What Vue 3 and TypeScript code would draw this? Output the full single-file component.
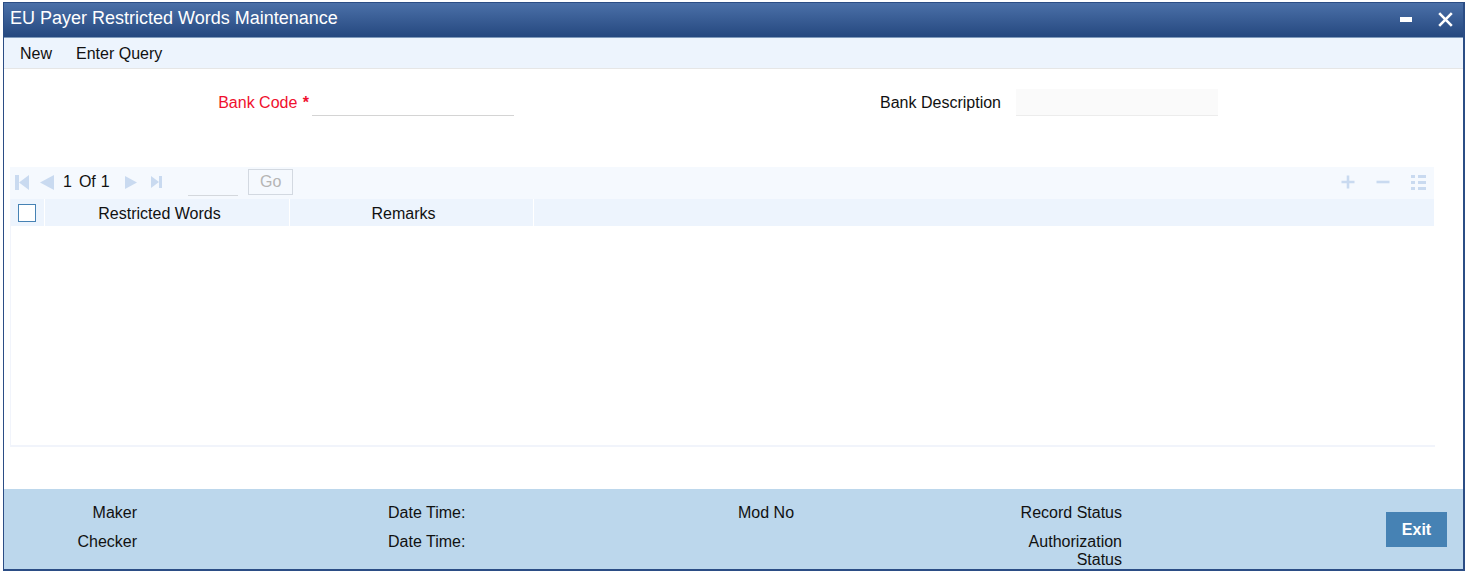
<script setup lang="ts">
const leftFooter: string[] = ['Maker', 'Checker']
const dateLabels: string[] = ['Date Time:', 'Date Time:']
</script>

<template>
  <div class="window">
    <header class="titlebar">
      <h1 class="title">EU Payer Restricted Words Maintenance</h1>
      <div class="win-actions">
        <svg class="win-icon" width="12" height="5" viewBox="0 0 12 5"><rect x="0" y="0" width="12" height="5" fill="#fff" /></svg>
        <svg class="win-icon" width="15" height="15" viewBox="0 0 15 15"><path d="M1.2 1.2 L13.8 13.8 M13.8 1.2 L1.2 13.8" stroke="#fff" stroke-width="2.6" fill="none" /></svg>
      </div>
    </header>

    <nav class="menu">
      <span class="menu-item">New</span>
      <span class="menu-item">Enter Query</span>
    </nav>

    <main class="content">
      <section class="form-row">
        <div class="field field-code">
          <label class="label required">Bank Code <b class="star">*</b></label>
          <div class="input"></div>
        </div>
        <div class="field field-desc">
          <label class="label">Bank Description</label>
          <div class="input readonly"></div>
        </div>
      </section>

      <section class="grid">
        <div class="pager">
          <div class="pager-left">
            <svg width="14" height="15" viewBox="0 0 14 15"><rect x="0" y="0" width="4" height="15" fill="#c9daf0" /><path d="M14 0 V15 L4 7.5 Z" fill="#c9daf0" /></svg>
            <svg width="14" height="15" viewBox="0 0 14 15" class="pg-prev"><path d="M14 0 V15 L0 7.5 Z" fill="#c9daf0" /></svg>
            <span class="pg-text pg-cur">1</span>
            <span class="pg-text pg-of">Of</span>
            <span class="pg-text pg-total">1</span>
            <svg width="12" height="13" viewBox="0 0 12 13" class="pg-next"><path d="M0 0 V13 L12 6.5 Z" fill="#c9daf0" /></svg>
            <svg width="11" height="12" viewBox="0 0 11 12" class="pg-last"><path d="M0 0 V12 L8 6 Z" fill="#c9daf0" /><rect x="8" y="0" width="3" height="12" fill="#c9daf0" /></svg>
            <div class="pg-input"></div>
            <button class="go" type="button">Go</button>
          </div>
          <div class="pager-right">
            <svg width="14" height="14" viewBox="0 0 14 14"><path d="M7 0.5 V13.5 M0.5 7 H13.5" stroke="#c9daf0" stroke-width="2.6" /></svg>
            <svg width="14" height="14" viewBox="0 0 14 14"><path d="M0.5 7 H13.5" stroke="#c9daf0" stroke-width="2.6" /></svg>
            <svg width="15" height="15" viewBox="0 0 15 15">
              <g fill="#c9daf0">
                <rect x="0" y="0" width="4" height="3" /><rect x="7" y="0" width="8" height="3" />
                <rect x="0" y="6" width="4" height="3" /><rect x="7" y="6" width="8" height="3" />
                <rect x="0" y="12" width="4" height="3" /><rect x="7" y="12" width="8" height="3" />
              </g>
            </svg>
          </div>
        </div>
        <div class="table-body">
          <div class="thead">
            <div class="th th-check"><span class="check"></span></div>
            <div class="th th-words">Restricted Words</div>
            <div class="th th-remarks">Remarks</div>
            <div class="th th-rest"></div>
          </div>
        </div>
      </section>
    </main>

    <footer class="footer">
      <div class="f-col f-who">
        <span v-for="t in leftFooter" :key="t" class="f-line">{{ t }}</span>
      </div>
      <div class="f-col f-date">
        <span v-for="(t, i) in dateLabels" :key="i" class="f-line">{{ t }}</span>
      </div>
      <div class="f-col f-mod">
        <span class="f-line">Mod No</span>
      </div>
      <div class="f-col f-status">
        <span class="f-line">Record Status</span>
        <span class="f-line f-wrap">Authorization Status</span>
      </div>
      <button class="exit" type="button">Exit</button>
    </footer>
  </div>
</template>

<style scoped>
.window {
  box-sizing: border-box;
  width: 1462px;
  height: 569px;
  margin: 2px 0 0 3px;
  border: solid #2b4d85;
  border-width: 1px 2px 2px 1px;
  display: flex;
  flex-direction: column;
  background: #fff;
  font-family: "Liberation Sans", Arial, sans-serif;
  font-size: 16px;
  color: #111;
  overflow: hidden;
}
.titlebar {
  flex: 0 0 35px;
  box-sizing: border-box;
  display: flex;
  align-items: center;
  justify-content: space-between;
  padding: 0 10px 4px 6px;
  background: linear-gradient(#4b70a8, #25487f);
  border-bottom: 1px solid #7f9abb;
}
.title {
  margin: 0;
  font-size: 18px;
  font-weight: 400;
  color: #fff;
}
.win-actions {
  display: flex;
  align-items: center;
  gap: 26px;
  margin-top: 3px;
}
.win-icon {
  display: block;
}
.menu {
  flex: 0 0 31px;
  box-sizing: border-box;
  display: flex;
  padding-left: 6px;
  background: #edf4fd;
  border-bottom: 1px solid #e6e6e6;
}
.menu-item {
  padding: 2px 10px 0;
  margin-right: 3px;
  line-height: 28px;
  color: #111;
}
.menu-item + .menu-item {
  padding: 2px 9px 0 10px;
  margin-left: 1px;
}
.content {
  flex: 1;
  min-height: 0;
  box-sizing: border-box;
  padding: 20px 0 0 6px;
}
.form-row {
  display: flex;
  height: 78px;
}
.field {
  display: flex;
  align-items: flex-start;
}
.field-code {
  flex: 0 0 870px;
}
.label {
  display: block;
  line-height: 27px;
  text-align: right;
}
.field-code .label {
  width: 299px;
  margin-right: 3px;
}
.field-desc .label {
  width: 121px;
  margin-right: 15px;
  white-space: nowrap;
}
.required {
  color: #f0102e;
}
.star {
  font-weight: 700;
  margin-left: 1px;
}
.input {
  box-sizing: border-box;
  width: 202px;
  height: 27px;
  border-bottom: 1px solid #d4d4d4;
}
.input.readonly {
  background: #fafafa;
  border-bottom-color: #ececec;
}
.grid {
  width: 1425px;
}
.pager {
  height: 32px;
  box-sizing: border-box;
  display: flex;
  justify-content: space-between;
  align-items: center;
  padding-bottom: 2px;
  width: 1424px;
  background: #f5f9fe;
}
.pager-left {
  display: flex;
  align-items: center;
  padding-left: 5px;
}
.pg-prev { margin-left: 11px; }
.pg-text { line-height: 28px; color: #111; }
.pg-cur { margin-left: 9px; }
.pg-of { margin-left: 7px; }
.pg-total { margin-left: 5px; }
.pg-next { margin-left: 15px; }
.pg-last { margin-left: 14px; }
.pg-input {
  box-sizing: border-box;
  width: 50px;
  height: 28px;
  margin: 0 10px 0 26px;
  border-bottom: 1px solid #d4d8dd;
}
.go {
  box-sizing: border-box;
  width: 45px;
  height: 26px;
  padding: 0 0 0 1px;
  background: #f5f9fe;
  border: 1px solid #d3d9e1;
  color: #b5b5b5;
  font: 16px "Liberation Sans", Arial, sans-serif;
}
.pager-right {
  display: flex;
  align-items: center;
  gap: 21px;
  padding-right: 8px;
}
.table-body {
  box-sizing: border-box;
  width: 1425px;
  height: 248px;
  border: solid #f1f4fb;
  border-width: 0 0 2px 1px;
}
.thead {
  display: flex;
  height: 27px;
  width: 1423px;
  background: #edf4fd;
}
.th {
  box-sizing: border-box;
  line-height: 29px;
  text-align: center;
  border-right: 1px solid #fff;
  color: #111;
}
.th-check {
  flex: 0 0 34px;
  display: flex;
  align-items: center;
  justify-content: center;
}
.th-words { flex: 0 0 245px; padding-right: 15px; }
.th-remarks { flex: 0 0 244px; padding-right: 16px; }
.th-rest { flex: 1; border-right: 0; }
.check {
  box-sizing: border-box;
  width: 18px;
  height: 18px;
  margin-right: 2px;
  background: #fff;
  border: 1px solid #4682b4;
}
.footer {
  flex: 0 0 80px;
  box-sizing: border-box;
  display: flex;
  background: #bcd7ec;
  color: #111;
}
.f-col {
  display: flex;
  flex-direction: column;
  padding-top: 14px;
}
.f-line {
  display: block;
  line-height: 19px;
  margin-bottom: 10px;
}
.f-who {
  width: 133px;
  text-align: right;
}
.f-date {
  width: 350px;
  margin-left: 251px;
}
.f-mod {
  width: 100px;
}
.f-status {
  width: 284px;
  text-align: right;
}
.f-wrap {
  margin: 0 0 0 auto;
  width: 100px;
  line-height: 18px;
  padding-top: 1px;
}
.exit {
  box-sizing: border-box;
  width: 61px;
  height: 35px;
  margin: 23px 0 0 264px;
  padding: 0;
  border: 0;
  background: #4682b4;
  color: #fff;
  font: 700 16px "Liberation Sans", Arial, sans-serif;
}
</style>
